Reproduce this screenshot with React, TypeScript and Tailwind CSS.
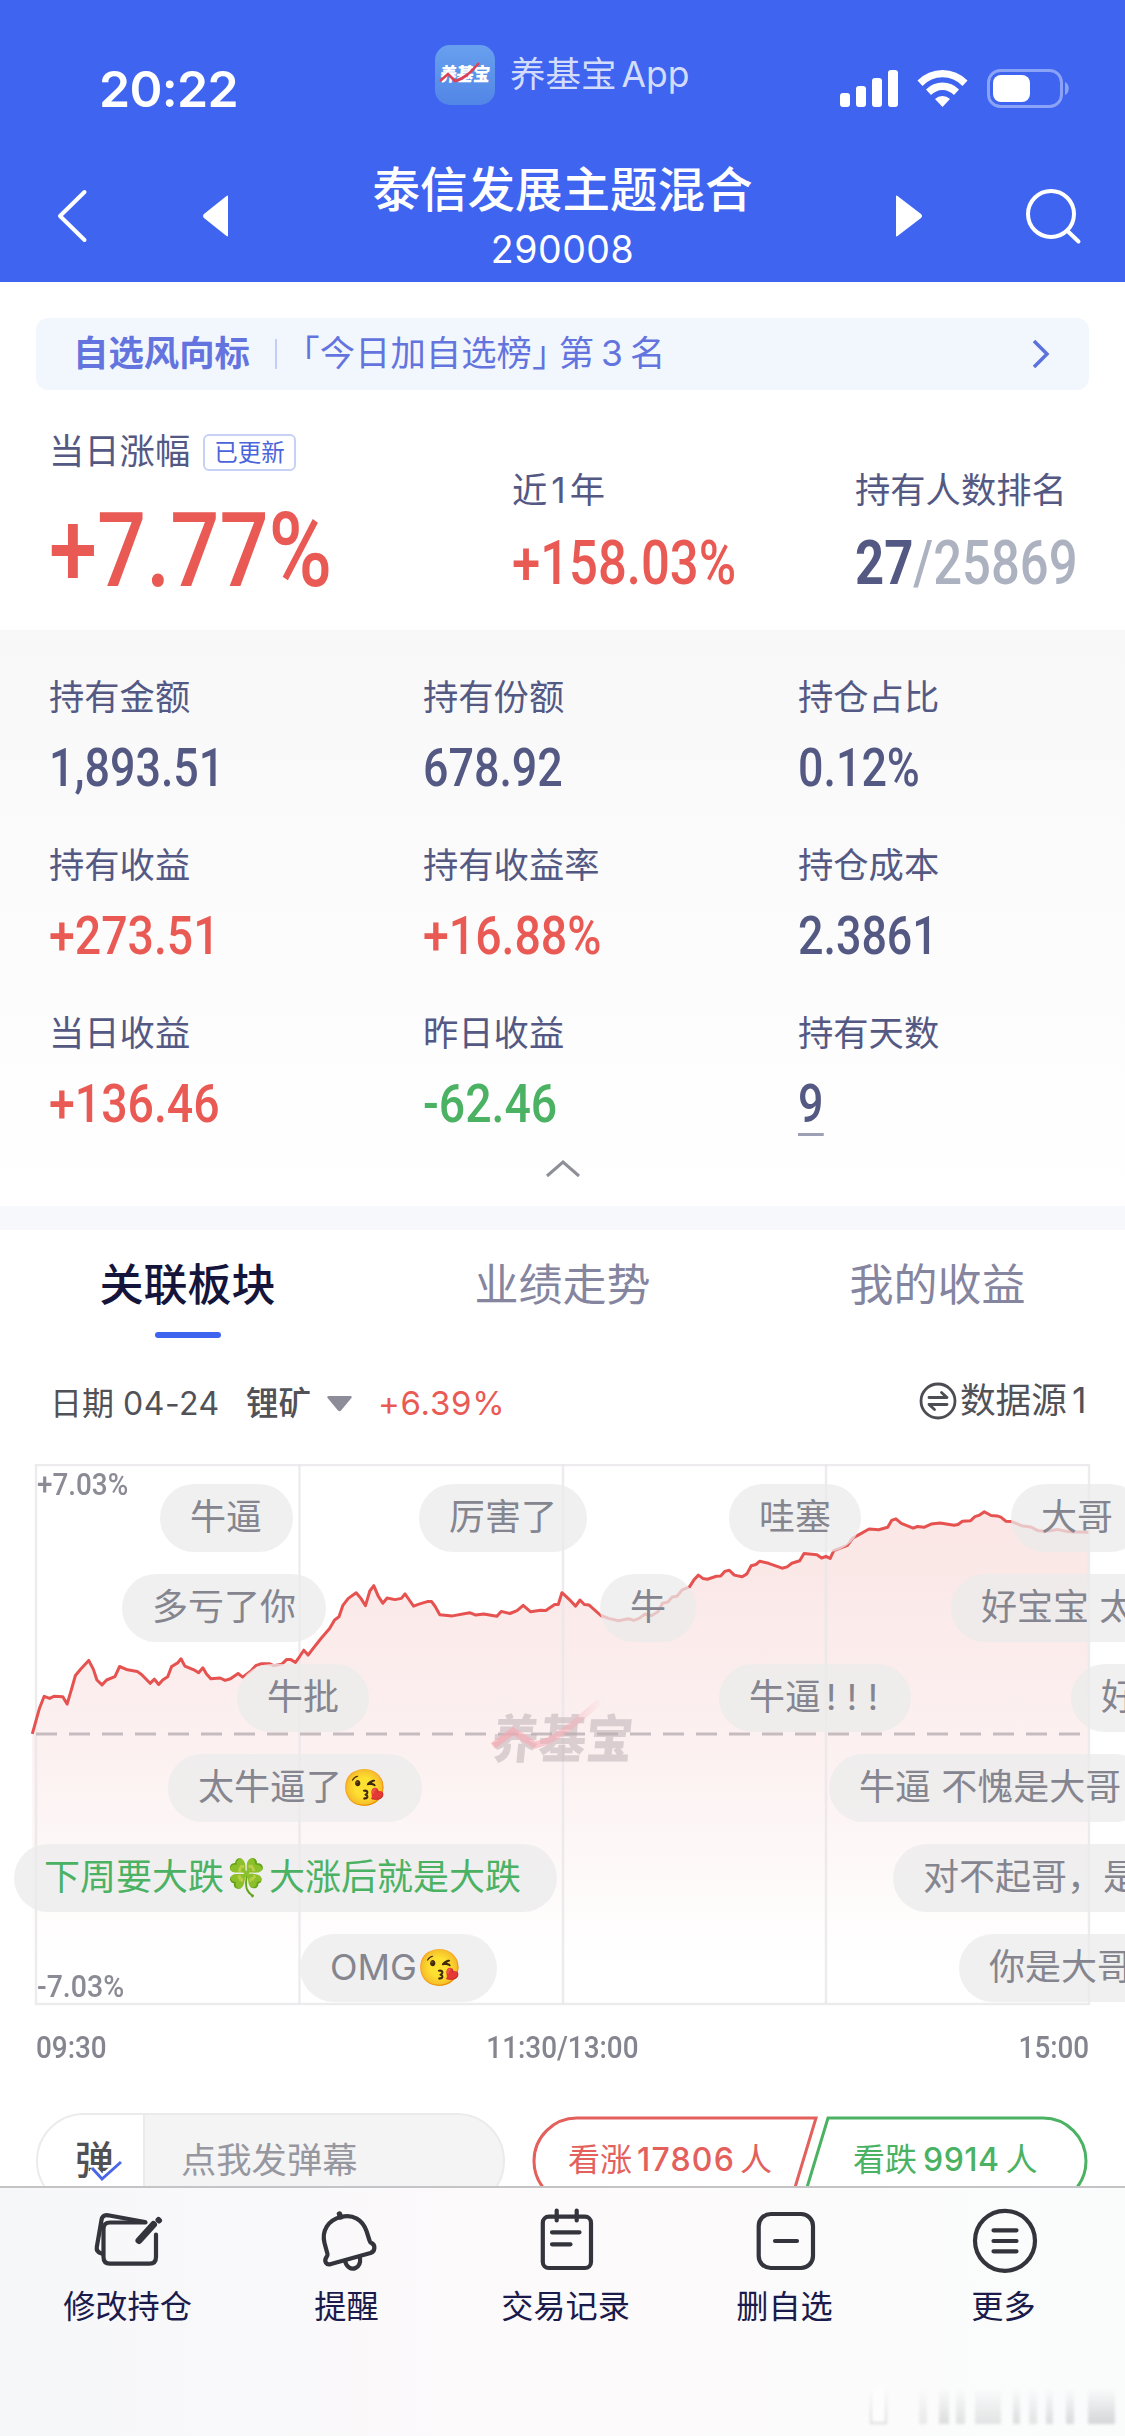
import { type ReactNode } from "react";
import { clsx } from "clsx";

interface Stat {
  label: string;
  value: string;
  tone?: string;
  underline?: boolean;
}

const stats: Stat[] = [
  { label: "持有金额", value: "1,893.51" },
  { label: "持有份额", value: "678.92" },
  { label: "持仓占比", value: "0.12%" },
  { label: "持有收益", value: "+273.51", tone: "text-[#e95a55]" },
  { label: "持有收益率", value: "+16.88%", tone: "text-[#e95a55]" },
  { label: "持仓成本", value: "2.3861" },
  { label: "当日收益", value: "+136.46", tone: "text-[#e95a55]" },
  { label: "昨日收益", value: "-62.46", tone: "text-[#4bb263]" },
  { label: "持有天数", value: "9", underline: true },
];

const tabs = ["关联板块", "业绩走势", "我的收益"];

// 弹幕: 位置相对图表区域
const bullets: { text: ReactNode; pos: string; tone?: string }[] = [
  { text: "牛逼", pos: "left-[160px] top-[20px] w-[133px]" },
  { text: "厉害了", pos: "left-[419px] top-[20px] w-[168px]" },
  { text: "哇塞", pos: "left-[729px] top-[20px] w-[132px]" },
  { text: "大哥", pos: "left-[1011px] top-[20px] w-[133px]" },
  { text: "多亏了你", pos: "left-[122px] top-[110px] w-[204px]" },
  { text: "牛", pos: "left-[600px] top-[110px] w-[96px]" },
  { text: "好宝宝 太", pos: "left-[951px] top-[110px] w-[290px]" },
  { text: "牛批", pos: "left-[237px] top-[200px] w-[132px]" },
  {
    text: (
      <>
        牛逼<span className="ml-[5px] tracking-[10.500px]">!!!</span>
      </>
    ),
    pos: "left-[719px] top-[200px] w-[192px]",
  },
  { text: "好", pos: "left-[1071px] top-[200px] w-[133px]" },
  { text: "太牛逼了😘", pos: "left-[168px] top-[290px] w-[254px]" },
  { text: "牛逼 不愧是大哥", pos: "left-[829px] top-[290px] w-[320px]" },
  { text: "下周要大跌🍀大涨后就是大跌", pos: "left-[14px] top-[380px] w-[543px]", tone: "text-[#4bb263]" },
  { text: "对不起哥，是", pos: "left-[893px] top-[380px] w-[300px]" },
  { text: "OMG😘", pos: "left-[300px] top-[470px] w-[197px]" },
  { text: "你是大哥", pos: "left-[959px] top-[470px] w-[204px]" },
];

const morning =
  "90,720 110,657 123,628 138,633 150,628 175,629 187,647 200,608 210,577 225,561 247,540 260,562 270,588 284,600 297,588 320,580 333,555 355,563 382,567 395,575 418,596 430,586 442,599 453,588 467,580 478,555 495,546 504,536 515,554 540,563 553,570 565,558 575,573 587,585 613,583 627,589 642,585 663,572 676,581 700,565 712,553 728,548 750,548 762,553 785,549 798,538 810,538 823,545 835,530 846,515 858,527 870,513 895,485 918,462 932,441 944,433 955,405 970,388 992,374 1005,388 1018,406 1030,370 1041,357 1053,382 1066,400 1078,387 1100,391 1118,388 1128,377 1140,392 1152,407 1167,402 1190,396 1202,396 1212,408 1225,428 1260,431 1308,423 1325,429 1347,426 1384,432 1396,420 1420,425 1440,418 1457,405 1478,421 1505,417 1520,418 1545,403 1555,403 1565,374";
const afternoon =
  "0,374 25,395 38,407 50,392 62,403 75,404 108,430 130,437 157,443 185,438 200,442 215,437 230,427 250,430 268,420 280,400 295,397 307,385 320,383 335,367 355,360 368,342 380,331 392,339 405,341 430,334 442,333 453,322 466,319 480,331 502,335 515,328 527,308 540,305 551,297 575,302 613,314 627,311 640,302 662,296 674,278 710,281 723,289 735,285 747,290 757,271 795,258 810,240 825,233 855,218 882,220 907,214 918,197 930,193 945,204 978,216 990,212 1008,214 1028,206 1053,203 1092,209 1103,207 1115,199 1137,198 1150,188 1163,184 1176,176 1195,185 1212,186 1222,189 1236,199 1252,200 1280,210 1305,213 1325,222 1345,224 1380,219 1410,225 1466,226";

const toPoints = (raw: string, offset: number) =>
  raw.split(" ").map((pair) => {
    const [x, y] = pair.split(",").map(Number);
    return `${((x + offset) * 0.35906).toFixed(1)},${(y * 0.40816 - 24).toFixed(1)}`;
  });

const linePoints = [...toPoints(morning, 0), ...toPoints(afternoon, 1565.2)].join(" ");

function Num({ children, className }: { children: ReactNode; className?: string }) {
  return (
    <span className={clsx("block w-fit origin-left whitespace-nowrap font-['Roboto','Noto_Sans',sans-serif] font-medium", className)}>
      {children}
    </span>
  );
}

function StatusBar() {
  return (
    <div className="flex h-[150px] items-start">
      <span className="ml-[99px] mt-[59px] w-[336px] text-[50px] font-semibold leading-[61px] tracking-[-0.700px]">20:22</span>
      <div className="mt-[45px] flex h-[60px] items-center">
        <div className="relative flex size-[60px] items-center justify-center rounded-[15px] bg-gradient-to-b from-[#69a0ee] to-[#5285e6]">
          <span className="-skew-x-6 scale-y-110 text-[17px] font-black tracking-[-0.500px]">养基宝</span>
          <svg className="absolute inset-0" viewBox="0 0 60 60" fill="none">
            <path d="M5 36L13 29L20 36C29 34 36 27 44 18" stroke="#dc4257" strokeWidth="2.600" />
          </svg>
        </div>
        <span className="ml-[15px] whitespace-nowrap text-[35.500px] leading-[60px] text-[#d3dcfb] [word-spacing:-5px]">养基宝 App</span>
      </div>
      <svg className="ml-auto mr-[55px] mt-[68px] h-[42px] w-[231px]" viewBox="0 0 231 42" fill="#fff">
        <rect x="1" y="25" width="10" height="14" rx="3" />
        <rect x="17" y="18" width="10" height="21" rx="3" />
        <rect x="33" y="10" width="10" height="29" rx="3" />
        <rect x="49" y="2" width="10" height="37" rx="3" />
        <path d="M78.500 12.500A35 35 0 0 1 128.500 12.500L123.500 18A27.500 27.500 0 0 0 83.500 18Z" />
        <path d="M87 21.500A23 23 0 0 1 120 21.500L115 27A16 16 0 0 0 92 27Z" />
        <path d="M96 31A11 11 0 0 1 111 31L103.500 39Z" />
        <rect x="149.500" y="2.500" width="73" height="36" rx="12" fill="none" stroke="#8ba3f6" strokeWidth="3" />
        <rect x="154" y="7" width="37" height="27" rx="8" />
        <path d="M226 14C231 16 231 25 226 27Z" fill="#8ba3f6" />
      </svg>
    </div>
  );
}

function Header() {
  return (
    <header className="h-[282px] shrink-0 bg-[#3e64f0] text-white">
      <StatusBar />
      <div className="flex h-[132px] items-start">
        <svg className="ml-[54px] mt-[36px] h-[60px] w-[36px]" viewBox="0 0 36 60" fill="none" stroke="#fff" strokeWidth="4" strokeLinecap="round" strokeLinejoin="round">
          <path d="M30.500 6L6 30L30.500 54" />
        </svg>
        <svg className="ml-[111px] mt-[43px] h-[46px] w-[30px]" viewBox="0 0 30 46" fill="#fff">
          <path d="M27 3.500V42.500Q27 44 25.500 43L3 25Q1 23 3 21L25.500 3Q27 2 27 3.500Z" />
        </svg>
        <div className="flex flex-1 flex-col items-center pt-[11px]">
          <h1 className="text-[47.500px] font-medium leading-[58px]">泰信发展主题混合</h1>
          <span className="text-[37.500px] leading-[61px] tracking-[0.500px]">290008</span>
        </div>
        <svg className="mt-[43px] h-[46px] w-[30px]" viewBox="0 0 30 46" fill="#fff">
          <path d="M2 3.500V42.500Q2 44 3.500 43L27 25Q29 23 27 21L3.500 3Q2 2 2 3.500Z" />
        </svg>
        <svg className="ml-[99px] mr-[38px] mt-[34px] h-[64px] w-[64px]" viewBox="0 0 64 64" fill="none" stroke="#fff" strokeWidth="4" strokeLinecap="round">
          <circle cx="28" cy="30" r="23" />
          <path d="M44.500 47L55.500 57.500" />
        </svg>
      </div>
    </header>
  );
}

function Summary() {
  return (
    <section className="h-[348px] shrink-0 px-[36px] pt-9">
      <div className="flex h-[72px] w-[1053px] items-center rounded-xl bg-[#f2f7fe] pl-[37px] pr-[38px] text-[35.400px] text-[#6474de]">
        <span className="font-bold">自选风向标</span>
        <span className="ml-[25px] h-[30px] w-[2px] bg-[#c4cdf3]" />
        <span className="ml-[25px] whitespace-nowrap [font-feature-settings:'halt']">「今日加自选榜」</span>
        <span className="ml-[9px] whitespace-nowrap">
          第<span className="mx-[7px]">3</span>名
        </span>
        <svg className="ml-auto h-[30px] w-[20px]" viewBox="0 0 20 30" fill="none" stroke="#5b72dc" strokeWidth="3.500">
          <path d="M3 2L16 15L3 28" />
        </svg>
      </div>
      <div className="flex text-[#545984]">
        <div className="ml-[13px] w-[463px] shrink-0 pt-[42px]">
          <div className="flex items-center">
            <span className="text-[35.300px] leading-[40px]">当日涨幅</span>
            <span className="ml-[13px] h-[37px] rounded-md border-2 border-[#c6d1f5] px-[9px] text-[23.500px] leading-[33px] text-[#4a64dc]">已更新</span>
          </div>
          <Num className="mt-[19px] scale-x-[0.84] text-[103px] font-bold leading-[120px] text-[#e95a55]">
            <span className="font-medium">+</span>7.77<span className="font-medium">%</span>
          </Num>
        </div>
        <div className="w-[343px] shrink-0 pt-[80px]">
          <div className="text-[35.300px] leading-[42px]">
            近<span className="mx-[4px]">1</span>年
          </div>
          <Num className="mt-[12px] scale-x-[0.84] text-[60.500px] leading-[80px] text-[#e95a55]">+158.03%</Num>
        </div>
        <div className="shrink-0 pt-[80px]">
          <div className="whitespace-nowrap text-[35.300px] leading-[42px]">持有人数排名</div>
          <Num className="mt-[12px] scale-x-[0.84] text-[60.500px] leading-[80px] text-[#adb2c0]">
            <span className="font-bold text-[#545984]">27</span>/25869
          </Num>
        </div>
      </div>
    </section>
  );
}

function Holdings() {
  return (
    <section className="h-[576px] shrink-0 bg-gradient-to-b from-[#f8f8f9] to-white pl-[49px] pt-[48px] text-[#545984]">
      <div className="grid grid-cols-[374px_375px_326px]">
        {stats.map((s) => (
          <div key={s.label} className="h-[168px]">
            <div className="text-[35.300px] leading-[40px]">{s.label}</div>
            <Num className={clsx("mt-[20px] text-[54px] leading-[60px]", s.tone ? "scale-x-[0.86]" : "scale-x-[0.83]", s.tone)}>
              {s.value}
              {s.underline && <span className="-mt-[1px] block h-[3px] bg-[#9da0b5]" />}
            </Num>
          </div>
        ))}
      </div>
      <svg className="-mt-[24px] ml-[496px] h-[20px] w-[36px]" viewBox="0 0 36 20" fill="none" stroke="#8e8f97" strokeWidth="3">
        <path d="M2 18L18 4L34 18" />
      </svg>
    </section>
  );
}

function ChartHeader() {
  return (
    <div className="flex h-[120px] shrink-0 items-center pl-[50px] pr-[36px] text-[#515258]">
      <span className="w-[170px] whitespace-nowrap text-[32px]">
        日期 <span className="tracking-[0.500px]">04-24</span>
      </span>
      <span className="ml-[26px] text-[32.500px] font-medium">锂矿</span>
      <svg className="ml-[16px] h-[16px] w-[25px]" viewBox="0 0 25 16" fill="#8d8d99">
        <path d="M2 0H23Q26 0 24 2.500L14 14.500Q12.500 16 11 14.500L1 2.500Q-1 0 2 0Z" />
      </svg>
      <span className="ml-[26px] text-[33px] tracking-[0.700px] text-[#e95a55]">+6.39%</span>
      <svg className="ml-auto -mt-[6px] size-[38px]" viewBox="0 0 38 38" fill="none" stroke="#4c4d53" strokeWidth="2.800" strokeLinecap="round" strokeLinejoin="round">
        <circle cx="19" cy="19" r="17" />
        <path d="M10 15.500H28L22.500 10.500M28 22.500H10L15.500 27.500" />
      </svg>
      <span className="-mt-[6px] ml-[3px] whitespace-nowrap text-[35.700px]">
        数据源<span className="ml-[5px] inline-block w-[17px]">1</span>
      </span>
    </div>
  );
}

function Chart() {
  return (
    <div className="relative h-[542px] w-[1125px] shrink-0 overflow-hidden">
      <svg className="block h-[542px] w-[1125px]" viewBox="0 0 1125 542" fill="none">
        <defs>
          <linearGradient id="area" x1="0" y1="50" x2="0" y2="500" gradientUnits="userSpaceOnUse">
            <stop offset="0" stopColor="#fae6e5" />
            <stop offset="0.500" stopColor="#fcf0f0" />
            <stop offset="1" stopColor="#ffffff" />
          </linearGradient>
          <linearGradient id="mark" x1="0" y1="0" x2="1" y2="0">
            <stop offset="0" stopColor="#f7a9b3" stopOpacity="0.700" />
            <stop offset="0.700" stopColor="#f7a9b3" stopOpacity="0.500" />
            <stop offset="1" stopColor="#f7a9b3" stopOpacity="0.050" />
          </linearGradient>
        </defs>
        <polygon points={`32,540 ${linePoints} 1089,540`} fill="url(#area)" />
        <g stroke="#e9e6ea" strokeOpacity="0.800" strokeWidth="2.400">
          <rect x="36" y="1" width="1053" height="539" />
          <path d="M299.500 0V540M563 0V540M826 0V540" />
        </g>
        <path d="M36 270H1089" stroke="#c6bcc0" strokeWidth="3" strokeDasharray="21 12" />
        <polyline points={linePoints} stroke="#e5524f" strokeWidth="3" strokeLinejoin="round" />
      </svg>

      {/* 水印 */}
      <span className="absolute left-[492px] top-[245px] -skew-x-6 scale-y-110 text-[47px] font-black leading-[60px] text-[#b9acb0]/50">养基宝</span>
      <svg className="absolute left-[488px] top-[228px] h-[80px] w-[120px]" viewBox="0 0 120 80" fill="none">
        <path d="M5 54L25 39L47 53C67 49 85 33 112 9" stroke="url(#mark)" strokeWidth="7" />
      </svg>

      <Num className="absolute left-[37px] top-0 scale-x-[0.87] text-[32px] leading-[40px] text-[#8b8b95]">+7.03%</Num>
      <Num className="absolute bottom-0 left-[37px] scale-x-[0.89] text-[32px] leading-[40px] text-[#8b8b95]">-7.03%</Num>

      {bullets.map((b) => (
        <div
          key={b.pos}
          className={clsx(
            "absolute h-[68px] whitespace-nowrap rounded-full bg-[#ebebeb]/75 pl-[30px] text-[36px] leading-[67px]",
            b.tone ?? "text-[#85858f]",
            b.pos
          )}
        >
          {b.text}
        </div>
      ))}
    </div>
  );
}

function VoteBar() {
  return (
    <div className="flex h-[96px] shrink-0 pl-[36px]">
      <div className="flex h-[96px] w-[469px] overflow-hidden rounded-full border-2 border-[#ebebec] bg-[#f4f4f5]">
        <div className="relative w-[107px] border-r-2 border-[#ebebec] bg-white pl-[37px] text-[39px] font-medium leading-[90px] text-[#505055]">
          弹
          <svg className="absolute left-[52px] top-[44px] h-[24px] w-[34px]" viewBox="0 0 34 24" fill="none">
            <path d="M2 9L12 20L31 3" stroke="#fff" strokeWidth="8" />
            <path d="M2 9L12 20L31 3" stroke="#4a66e8" strokeWidth="3" />
          </svg>
        </div>
        <span className="ml-[36px] text-[35.300px] leading-[92px] text-[#97979f]">点我发弹幕</span>
      </div>
      <div className="relative ml-[26px] flex w-[560px] pt-[1px] text-[32px] leading-[92px]">
        <svg className="absolute inset-0 h-[96px] w-[560px]" viewBox="0 0 560 96" fill="none" strokeWidth="3">
          <path d="M285 5H46A43 43 0 0 0 46 91H259Z" stroke="#e3605c" />
          <path d="M297 5H512A43 43 0 0 1 512 91H271Z" stroke="#4bb263" />
        </svg>
        <span className="ml-[37px] w-[285px] whitespace-nowrap text-[#e3605c]">
          看涨<span className="mx-[5px] font-medium tracking-[1.200px]">17806</span>人
        </span>
        <span className="whitespace-nowrap text-[#4bb263]">
          看跌<span className="mx-[6px] font-medium tracking-[0.500px]">9914</span>人
        </span>
      </div>
    </div>
  );
}

const navItems: { label: string; icon: ReactNode }[] = [
  {
    label: "修改持仓",
    icon: (
      <>
        <path d="M52.500 17.500H17Q10.500 17.500 10.500 24V52Q10.500 58.700 17 58.700H56.500Q63 58.700 63 52V29.500" />
        <path d="M52 17L15 10.300Q9.500 9.500 8.500 15L3.800 42Q3 47 8.500 48.500" />
        <path d="M46 35.500L60.500 19.500" strokeWidth="7" />
        <path d="M65.500 15L66 15.500" strokeWidth="6" />
      </>
    ),
  },
  {
    label: "提醒",
    icon: (
      <>
        <path d="M29 12C16 15 9.500 26 12.500 38L15.500 49Q15.800 50.500 14.500 52C11.500 56.500 14.500 60.500 19 59L58.500 48C63.500 46 63.500 40 59.500 38Q58 37.500 57.500 35.500L54.500 26C50.500 14.500 41 9 29 12Z" />
        <path d="M27.500 9L28.500 12" strokeWidth="5.500" />
        <path d="M33 56C34.500 62 39 65 43.500 63C48 61 48.500 57 48 53" />
      </>
    ),
  },
  {
    label: "交易记录",
    icon: (
      <>
        <rect x="11.800" y="11.700" width="48.200" height="51.300" rx="6" />
        <path d="M25.700 5.500V15.500M45.700 5.500V15.500M21 27.300H48.500M21 39.300H39.500" />
      </>
    ),
  },
  {
    label: "删自选",
    icon: (
      <>
        <rect x="8.700" y="9" width="54.300" height="54" rx="12" />
        <path d="M25 36H47" />
      </>
    ),
  },
  {
    label: "更多",
    icon: (
      <>
        <circle cx="36" cy="35.800" r="30" />
        <path d="M24.500 25.300H47.500M24.500 36H47.500M24.500 46.300H47.500" />
      </>
    ),
  },
];

function BottomNav() {
  return (
    <nav className="relative h-[250px] shrink-0 border-t-2 border-[#c4c4c6] bg-gradient-to-r from-[#f6f7f9] via-[#fdfafb] to-[#fafcfc]">
      <div className="ml-[18px] flex w-[1095px] pt-[17px]">
        {navItems.map((item) => (
          <div key={item.label} className="flex w-[219px] flex-col items-center">
            <svg className="size-[70px]" viewBox="0 0 70 70" fill="none" stroke="#33343c" strokeWidth="4.200" strokeLinecap="round" strokeLinejoin="round">
              {item.icon}
            </svg>
            <span className="mt-[12px] text-[32.200px] leading-[40px] text-[#1b1b4b]">{item.label}</span>
          </div>
        ))}
      </div>
      <div className="absolute bottom-[12px] right-[10px] flex h-[36px] w-[245px] items-stretch opacity-60 blur-[1.500px]">
        <span className="w-[17px] bg-gradient-to-b from-transparent to-[#c4c4c6] px-[2px] pb-[2px]">
          <span className="block h-full bg-white" />
        </span>
        <span className="ml-[32px] w-[8px] bg-gradient-to-b from-transparent to-[#dcdcde]" />
        <span className="ml-[12px] w-[10px] bg-gradient-to-b from-transparent to-[#c8c8ca]" />
        <span className="ml-[7px] w-[9px] bg-gradient-to-b from-transparent to-[#cfcfd1]" />
        <span className="ml-[10px] w-[26px] bg-gradient-to-b from-transparent to-[#d2d2d4]" />
        <span className="ml-[12px] w-[7px] bg-gradient-to-b from-transparent to-[#c8c8ca]" />
        <span className="ml-[9px] w-[8px] bg-gradient-to-b from-transparent to-[#d2d2d4]" />
        <span className="ml-[9px] w-[7px] bg-gradient-to-b from-transparent to-[#c8c8ca]" />
        <span className="ml-[13px] w-[8px] bg-gradient-to-b from-transparent to-[#c4c4c6]" />
        <span className="ml-[14px] w-[27px] bg-gradient-to-b from-transparent to-[#bcbcbe]" />
      </div>
    </nav>
  );
}

export default function App() {
  return (
    <div className="flex h-[2436px] w-[1125px] flex-col overflow-hidden bg-white font-['Inter','Noto_Sans_CJK_SC',sans-serif]">
      <main className="flex h-[2186px] shrink-0 flex-col overflow-hidden">
        <Header />
        <Summary />
        <Holdings />
        <div className="h-[24px] shrink-0 bg-[#f6f8fc]" />
        <div className="flex h-[114px] shrink-0">
          {tabs.map((tab, i) => (
            <div key={tab} className="flex w-[375px] flex-col items-center pt-[30px]">
              <span className={clsx("text-[44px] leading-[50px]", i === 0 ? "font-medium text-[#15153c]" : "text-[#85859f]")}>{tab}</span>
              {i === 0 && <span className="mt-[22px] h-[6px] w-[66px] rounded-full bg-[#3e64f0]" />}
            </div>
          ))}
        </div>
        <ChartHeader />
        <Chart />
        <div className="flex h-[107px] shrink-0 justify-between pl-[36px] pr-[36px] pt-[21px] text-[32px] leading-[40px] text-[#85858f]">
          <Num className="scale-x-[0.87]">09:30</Num>
          <Num className="origin-center! scale-x-[0.87]">11:30/13:00</Num>
          <Num className="origin-right! scale-x-[0.87]">15:00</Num>
        </div>
        <VoteBar />
      </main>
      <BottomNav />
    </div>
  );
}
